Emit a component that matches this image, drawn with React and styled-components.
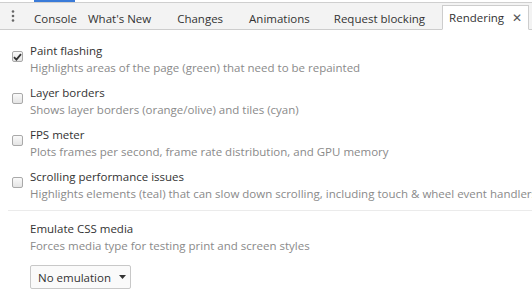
import styled, { createGlobalStyle } from "styled-components";

const Global = createGlobalStyle`
  body {
    margin: 0;
    background: #fff;
    font-family: "Open Sans", "Noto Sans", sans-serif;
    font-size: 11.5px;
    color: #333;
  }
`;

const S = {
  Page: styled.div`
    width: 532px;
    height: 290px;
    overflow: hidden;
    position: relative;
  `,

  Accent: styled.div`
    position: absolute;
    left: 34px;
    top: 0;
    width: 41px;
    height: 2px;
    background: #3a7bd9;
  `,

  TabBar: styled.div`
    margin-top: 2px;
    height: 28px;
    display: flex;
    align-items: flex-end;
    background: #f3f3f3;
    border-top: 1px solid #cfcfcf;
    border-bottom: 1px solid #cdcdcd;
    box-sizing: border-box;
  `,

  Menu: styled.div`
    width: 25px;
    height: 26px;
    flex-shrink: 0;
    display: flex;
    align-items: center;
    justify-content: center;
  `,

  Tab: styled.div`
    height: 24px;
    display: flex;
    align-items: center;
    padding: 0 ${(p) => p.$pad}px 0 ${(p) => p.$padL ?? p.$pad}px;
    color: #333;
    white-space: nowrap;
    box-sizing: border-box;
    margin-bottom: -1px;
    ${(p) =>
      p.$active &&
      `
      background: #fff;
      border: 1px solid #cdcdcd;
      border-bottom: 1px solid #fff;
      height: 25px;
    `}
  `,

  Close: styled.span`
    margin-left: 8px;
    font-size: 12px;
    color: #555;
  `,

  Body: styled.div`
    padding-top: 12px;
  `,

  Row: styled.div`
    display: flex;
    align-items: flex-start;
    height: 42px;
    padding-left: 12px;
  `,

  Box: styled.div`
    flex-shrink: 0;
    width: 11px;
    height: 11px;
    margin-top: 9px;
    margin-right: 7px;
    border: 1px solid #a9a9a9;
    border-radius: 2px;
    background: linear-gradient(#fafafa, #e4e4e4);
    box-sizing: border-box;
    display: flex;
    align-items: center;
    justify-content: center;
  `,

  Text: styled.div`
    display: flex;
    flex-direction: column;
    line-height: 17px;
    white-space: nowrap;
  `,

  Title: styled.div`
    color: #333;
  `,

  Desc: styled.div`
    color: #8a8a8a;
  `,

  Divider: styled.div`
    margin: 0 0 0 8px;
    border-top: 1px solid #ebebeb;
  `,

  Media: styled.div`
    padding: 9px 0 0 30px;
    line-height: 17px;
  `,

  Select: styled.div`
    margin-top: 11px;
    width: 101px;
    height: 24px;
    box-sizing: border-box;
    border: 1px solid #c8c8c8;
    border-radius: 2px;
    background: #fafafa;
    display: flex;
    align-items: center;
    justify-content: space-between;
    padding: 0 4px 0 7px;
    white-space: nowrap;
    color: #333;
  `,
};

const Dots = () => (
  <svg width="4" height="12" viewBox="0 0 4 12">
    <circle cx="2" cy="1.5" r="1.3" fill="#666" />
    <circle cx="2" cy="6" r="1.3" fill="#666" />
    <circle cx="2" cy="10.5" r="1.3" fill="#666" />
  </svg>
);

const Check = () => (
  <svg width="9" height="8" viewBox="0 0 9 8">
    <path d="M1 4.2 L3.4 6.6 L8 1.2" stroke="#333" strokeWidth="1.8" fill="none" />
  </svg>
);

const options = [
  ["Paint flashing", "Highlights areas of the page (green) that need to be repainted", true],
  ["Layer borders", "Shows layer borders (orange/olive) and tiles (cyan)"],
  ["FPS meter", "Plots frames per second, frame rate distribution, and GPU memory"],
  ["Scrolling performance issues", "Highlights elements (teal) that can slow down scrolling, including touch & wheel event handlers"],
];

export default function App() {
  return (
    <S.Page>
      <Global />
      <S.Accent />
      <S.TabBar>
        <S.Menu><Dots /></S.Menu>
        <S.Tab $pad={5} $padL={9}>Console</S.Tab>
        <S.Tab $pad={13} $padL={6}>What's New</S.Tab>
        <S.Tab $pad={13}>Changes</S.Tab>
        <S.Tab $pad={12} $padL={13}>Animations</S.Tab>
        <S.Tab $pad={17} $padL={12}>Request blocking</S.Tab>
        <S.Tab $active $pad={6} $padL={6}>
          Rendering<S.Close>✕</S.Close>
        </S.Tab>
      </S.TabBar>
      <S.Body>
        {options.map(([t, d, c]) => (
          <S.Row key={t}>
            <S.Box>{c && <Check />}</S.Box>
            <S.Text>
              <S.Title>{t}</S.Title>
              <S.Desc>{d}</S.Desc>
            </S.Text>
          </S.Row>
        ))}
        <S.Divider />
        <S.Media>
          <S.Title>Emulate CSS media</S.Title>
          <S.Desc>Forces media type for testing print and screen styles</S.Desc>
          <S.Select>
            No emulation
            <svg width="7" height="4" viewBox="0 0 7 4"><path d="M0 0 H7 L3.5 4 Z" fill="#333" /></svg>
          </S.Select>
        </S.Media>
      </S.Body>
    </S.Page>
  );
}
